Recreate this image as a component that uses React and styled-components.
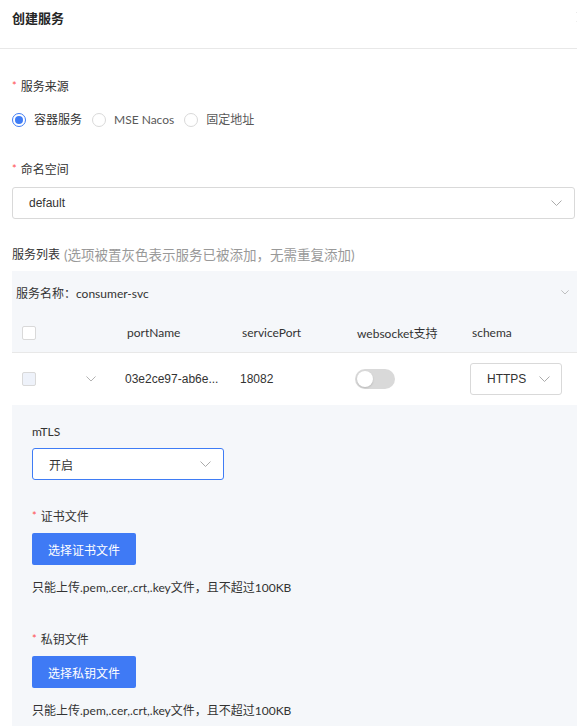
import React, { useState } from 'react';
import styled, { createGlobalStyle } from 'styled-components';

const GlobalStyle = createGlobalStyle`
  html, body {
    margin: 0;
    padding: 0;
    background: #fff;
    overflow: hidden;
  }
  body {
    font-family: "Lato", "Noto Sans CJK SC", sans-serif;
    font-size: 12px;
    color: #333;
  }
`;

const Page = styled.div`
  width: 600px;
`;

const Header = styled.div`
  display: flex;
  justify-content: space-between;
  align-items: flex-start;
  height: 49px;
  padding: 10px 12px 0;
  box-sizing: border-box;
  border-bottom: 1px solid #e8e8e8;
`;

const Title = styled.div`
  font-size: 13px;
  line-height: 16px;
  font-weight: 600;
  color: #262626;
`;

const CloseBtn = styled.span`
  display: flex;
  margin-top: 1px;
  color: #666;
`;

const Body = styled.div`
  padding: 28px 12px 0;
`;

const Item = styled.div`
  margin-top: ${(p) => p.$top || 0}px;
`;

const Label = styled.div`
  display: flex;
  align-items: center;
  height: 20px;
  line-height: 20px;
  font-size: 12px;
  color: #333;
  white-space: nowrap;
  margin-bottom: ${(p) => (p.$gap != null ? p.$gap : 7)}px;
`;

const Star = styled.span`
  color: #ff4d4f;
  font-size: 11px;
  line-height: 10px;
  margin-right: 4px;
  margin-top: -3px;
`;

const Muted = styled.span`
  color: #999;
  font-size: 13.5px;
  margin-left: 4px;
`;

const RadioGroup = styled.div`
  display: flex;
  align-items: center;
  height: 32px;
`;

const RadioItem = styled.label`
  display: flex;
  align-items: center;
  margin-right: 2px;
  cursor: pointer;
  color: ${(p) => (p.$checked ? '#333' : '#595959')};
`;

const RadioDot = styled.span`
  width: 14px;
  height: 14px;
  box-sizing: border-box;
  border-radius: 50%;
  border: 1px solid ${(p) => (p.$checked ? '#3f7cf5' : '#d9d9d9')};
  background: #fff;
  display: flex;
  align-items: center;
  justify-content: center;
  &::after {
    content: '';
    width: 8px;
    height: 8px;
    border-radius: 50%;
    background: #3f7cf5;
    display: ${(p) => (p.$checked ? 'block' : 'none')};
  }
`;

const RadioText = styled.span`
  padding: 0 8px;
  line-height: 20px;
`;

const SelectBox = styled.div`
  display: flex;
  align-items: center;
  justify-content: space-between;
  height: 32px;
  box-sizing: border-box;
  width: ${(p) => p.$width || 'auto'};
  padding: 0 ${(p) => p.$right || 12}px 0 ${(p) => p.$left || 16}px;
  border: 1px solid ${(p) => (p.$active ? '#3f7cf5' : '#d9d9d9')};
  border-radius: 3px;
  background: #fff;
  font-family: ${(p) => (p.$latin ? '"Liberation Sans", "Noto Sans CJK SC", sans-serif' : 'inherit')};
  color: #333;
  font-size: 12px;
`;

const Panel = styled.div`
  margin-top: 6px;
  background: #f5f7fa;
`;

const PanelHead = styled.div`
  display: flex;
  align-items: center;
  justify-content: space-between;
  height: 42px;
  padding: 0 19px 0 4px;
  color: #333;
`;

const Grid = styled.div`
  display: grid;
  grid-template-columns: 58px 45px 115px 115px 115px 1fr;
  align-items: center;
  padding-left: 10px;
  height: ${(p) => p.$height}px;
  background: ${(p) => p.$bg || 'transparent'};
  border-bottom: ${(p) => (p.$line ? '1px solid #e8e8e8' : 'none')};
`;

const HeadCell = styled.div`
  padding-left: 2px;
  color: #333;
`;

const Cell = styled.div`
  color: #333;
  font-family: ${(p) => (p.$latin ? '"Liberation Sans", sans-serif' : 'inherit')};
  padding-left: ${(p) => p.$pl || 0}px;
  display: flex;
  align-items: center;
`;

const Check = styled.span`
  display: block;
  width: 14px;
  height: 14px;
  box-sizing: border-box;
  border: 1px solid #d9d9d9;
  border-radius: 2px;
  background: ${(p) => (p.$disabled ? '#eef2fa' : '#fff')};
`;

const Switch = styled.span`
  display: flex;
  align-items: center;
  width: 40px;
  height: 20px;
  border-radius: 10px;
  background: #d9d9d9;
  padding: 0 2px;
  box-sizing: border-box;
  &::after {
    content: '';
    width: 16px;
    height: 16px;
    border-radius: 50%;
    background: #fff;
    box-shadow: 0 1px 2px rgba(0, 0, 0, 0.15);
  }
`;

const Expand = styled.div`
  padding: 17px 20px 40px;
`;

const PrimaryButton = styled.button`
  display: block;
  height: 32px;
  padding: 0 16px;
  border: none;
  border-radius: 2px;
  background: #3f7af5;
  color: #fff;
  font-family: inherit;
  font-size: 12px;
  cursor: pointer;
`;

const Help = styled.div`
  margin-top: 13px;
  height: 20px;
  line-height: 20px;
  color: #333;
`;

const Chevron = ({ color = '#aaa', w = 11 }) => (
  <svg width={w} height={w * 0.55} viewBox="0 0 11 6" fill="none">
    <polyline points="0.5,0.5 5.5,5.5 10.5,0.5" stroke={color} strokeWidth="1" />
  </svg>
);

const CloseIcon = () => (
  <svg width="12" height="12" viewBox="0 0 12 12">
    <path d="M1 1 L11 11 M11 1 L1 11" stroke="#666" strokeWidth="1.2" />
  </svg>
);

function Radio({ checked, children, onClick }) {
  return (
    <RadioItem $checked={checked} onClick={onClick}>
      <RadioDot $checked={checked} />
      <RadioText>{children}</RadioText>
    </RadioItem>
  );
}

function CertField({ label, button, top }) {
  return (
    <Item $top={top}>
      <Label $gap={6}>
        <Star>*</Star>
        {label}
      </Label>
      <PrimaryButton>{button}</PrimaryButton>
      <Help>只能上传.pem,.cer,.crt,.key文件，且不超过100KB</Help>
    </Item>
  );
}

export default function App() {
  const [source, setSource] = useState('k8s');
  const sources = [
    { key: 'k8s', name: '容器服务' },
    { key: 'mse', name: 'MSE Nacos' },
    { key: 'fixed', name: '固定地址' },
  ];

  return (
    <Page>
      <GlobalStyle />
      <Header>
        <Title>创建服务</Title>
        <CloseBtn>
          <CloseIcon />
        </CloseBtn>
      </Header>

      <Body>
        <Item>
          <Label>
            <Star>*</Star>服务来源
          </Label>
          <RadioGroup>
            {sources.map((s) => (
              <Radio key={s.key} checked={source === s.key} onClick={() => setSource(s.key)}>
                {s.name}
              </Radio>
            ))}
          </RadioGroup>
        </Item>

        <Item $top={24}>
          <Label>
            <Star>*</Star>命名空间
          </Label>
          <SelectBox $latin $width="calc(100% - 13px)">
            <span>default</span>
            <Chevron />
          </SelectBox>
        </Item>

        <Item $top={26}>
          <Label $gap={0}>
            服务列表<Muted>(选项被置灰色表示服务已被添加，无需重复添加)</Muted>
          </Label>
          <Panel>
            <PanelHead>
              <span>服务名称：consumer-svc</span>
              <Chevron w={8} />
            </PanelHead>
            <Grid $height={39} $line>
              <Cell>
                <Check />
              </Cell>
              <div />
              <HeadCell>portName</HeadCell>
              <HeadCell>servicePort</HeadCell>
              <HeadCell>websocket支持</HeadCell>
              <HeadCell>schema</HeadCell>
            </Grid>
            <Grid $height={52} $bg="#fff">
              <Cell>
                <Check $disabled />
              </Cell>
              <Cell $pl={6}>
                <Chevron w={10} />
              </Cell>
              <Cell $latin>03e2ce97-ab6e...</Cell>
              <Cell $latin>18082</Cell>
              <Cell>
                <Switch />
              </Cell>
              <Cell>
                <SelectBox $latin $width="92px" $right={11}>
                  <span>HTTPS</span>
                  <Chevron />
                </SelectBox>
              </Cell>
            </Grid>
            <Expand>
              <Item>
                <Label $gap={6}>mTLS</Label>
                <SelectBox $active $width="192px">
                  <span>开启</span>
                  <Chevron />
                </SelectBox>
              </Item>
              <CertField top={27} label="证书文件" button="选择证书文件" />
              <CertField top={32} label="私钥文件" button="选择私钥文件" />
            </Expand>
          </Panel>
        </Item>
      </Body>
    </Page>
  );
}
